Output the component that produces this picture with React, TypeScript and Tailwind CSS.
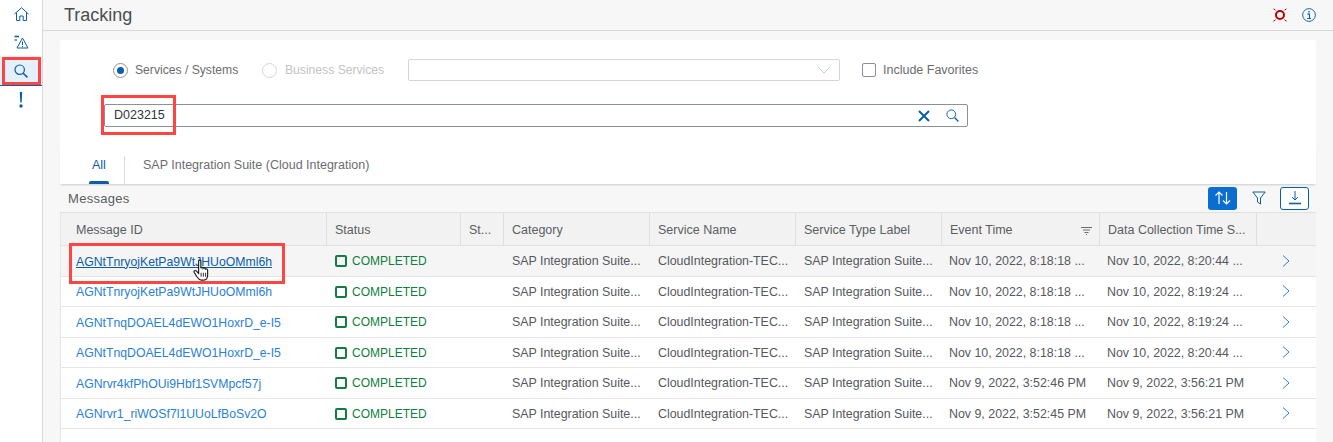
import React from "react";

const font = { fontFamily: '"Liberation Sans", Arial, sans-serif' };

const Home = () => (
  <svg width="15" height="14" viewBox="0 0 15 14" fill="none" stroke="#0a5ea8" strokeWidth="1">
    <path d="M0.5 7 L7.5 0.8 L14.5 7 M2.5 5.5 V13.5 H5.8 V9 H9.2 V13.5 H12.5 V5.5" />
  </svg>
);
const AlertList = () => (
  <svg width="15" height="14" viewBox="0 0 15 14" fill="none" stroke="#0a5ea8" strokeWidth="1">
    <path d="M0.5 1.5 H5" strokeWidth="1.6" />
    <path d="M0.5 5 H3" strokeWidth="1.2" />
    <path d="M8.5 3 L14 13 H3 Z" />
    <path d="M8.5 6.5 V10 M8.5 10.8 V12" />
  </svg>
);
const Search = ({ size = 14, w = 1.2 }: { size?: number; w?: number }) => (
  <svg width={size} height={size} viewBox="0 0 14 14" fill="none" stroke="#0a5ea8" strokeWidth={w}>
    <circle cx="5.7" cy="5.7" r="4.7" />
    <path d="M9.2 9.2 L13.4 13.4" strokeWidth={w + 0.4} />
  </svg>
);
const Chevron = () => (
  <svg width="8" height="12" viewBox="0 0 8 12" fill="none" stroke="#2f7fc9" strokeWidth="1">
    <path d="M1 0.5 L7 6 L1 11.5" />
  </svg>
);

const columns = [
  "Message ID",
  "Status",
  "St...",
  "Category",
  "Service Name",
  "Service Type Label",
  "Event Time",
  "Data Collection Time S...",
  "",
];

const gridCols = "grid grid-cols-[266px_134px_43px_146px_146px_146px_158px_157px_59px]";

const rows = [
  ["AGNtTnryojKetPa9WtJHUoOMml6h", "Nov 10, 2022, 8:18:18 ...", "Nov 10, 2022, 8:20:44 ..."],
  ["AGNtTnryojKetPa9WtJHUoOMml6h", "Nov 10, 2022, 8:18:18 ...", "Nov 10, 2022, 8:19:24 ..."],
  ["AGNtTnqDOAEL4dEWO1HoxrD_e-I5", "Nov 10, 2022, 8:18:18 ...", "Nov 10, 2022, 8:19:24 ..."],
  ["AGNtTnqDOAEL4dEWO1HoxrD_e-I5", "Nov 10, 2022, 8:18:18 ...", "Nov 10, 2022, 8:20:44 ..."],
  ["AGNrvr4kfPhOUi9Hbf1SVMpcf57j", "Nov 9, 2022, 3:52:46 PM", "Nov 9, 2022, 3:56:21 PM"],
  ["AGNrvr1_riWOSf7l1UUoLfBoSv2O", "Nov 9, 2022, 3:52:45 PM", "Nov 9, 2022, 3:56:21 PM"],
];

const cell = "flex items-center pt-[2px] text-[12.4px] text-[#55595d] whitespace-nowrap";

export default function App() {
  return (
    <div style={font} className="flex w-[1333px] h-[442px] overflow-hidden bg-[#f7f7f7] text-[13px] text-[#32363a]">
      <nav className="w-[43px] shrink-0 bg-white border-r border-[#d9d9d9] flex flex-col">
        <div className="h-[28px] flex items-center justify-center"><Home /></div>
        <div className="h-[28px] flex items-center justify-center"><AlertList /></div>
        <div className="relative h-[30px] flex items-center justify-center bg-[#e5f0fa] border-b border-[#0a5ea8]">
          <Search size={14} />
          <div className="absolute left-[2px] top-[1px] w-[39px] h-[28px] border-[3px] border-[#ff4444]" />
        </div>
        <div className="h-[28px] flex items-center justify-center text-[#0a5ea8]">
          <svg width="4" height="16" viewBox="0 0 4 16" fill="#0a5ea8">
            <path d="M0.8 0 H3.2 L2.7 10.5 H1.3 Z" />
            <circle cx="2" cy="14" r="1.7" />
          </svg>
        </div>
      </nav>

      <main className="flex-1 min-w-0 flex flex-col">
        <header className="h-[31px] shrink-0 border-b border-[#d9d9d9] flex items-center justify-between pl-[21px] pr-[18px] mr-[-1px]">
          <h1 className="text-[18px] leading-none text-[#4a4e52]">Tracking</h1>
          <div className="flex items-center gap-[15px]">
            <svg width="14" height="14" viewBox="0 0 14 14" fill="none" stroke="#bb0000" className="mt-[-1px]">
              <circle cx="7" cy="7" r="4" strokeWidth="2" />
              <path d="M0.5 0.8 L2.5 2.2 M13.5 0.8 L11.5 2.2 M0.5 13.2 L2.5 11.8 M13.5 13.2 L11.5 11.8" strokeWidth="1" />
            </svg>
            <svg width="14" height="14" viewBox="0 0 15 15" fill="none" stroke="#0a5ea8">
              <circle cx="7.5" cy="7.5" r="6.8" />
              <circle cx="7.5" cy="4" r="0.9" fill="#0a5ea8" stroke="none" />
              <path d="M5.8 6.5 H8 V11 M5.6 11.2 H9.6" strokeWidth="1.2" />
            </svg>
          </div>
        </header>

        <div className="flex-1 min-h-0 pl-[17px] pr-[17px] pt-[9px] flex flex-col">
          <section className="relative h-[105px] shrink-0 bg-white rounded-t-[3px] pl-[44px]">
            <div className="flex items-center h-[22px] mt-[19px] text-[12.15px]">
              <span className="w-[15px] h-[15px] rounded-full border border-[#89919a] flex items-center justify-center mr-[7px] ml-[9px]">
                <span className="w-[7px] h-[7px] rounded-full bg-[#0a5ea8]" />
              </span>
              <span className="w-[123px] text-[#6a6d70]">Services / Systems</span>
              <span className="w-[15px] h-[15px] rounded-full border border-[#d5d7d9] mr-[8px] ml-[4px]" />
              <span className="w-[123px] text-[#c2c4c6]">Business Services</span>
              <div className="w-[432px] h-[22px] border border-[#d3d5d7] rounded-[2px] flex items-center justify-end pr-[9px]">
                <svg width="12" height="7" viewBox="0 0 12 7" fill="none" stroke="#b9cde2">
                  <path d="M0.5 0.5 L6 6 L11.5 0.5" />
                </svg>
              </div>
              <span className="w-[14px] h-[14px] border border-[#89919a] rounded-[2px] ml-[22px] mr-[7px]" />
              <span className="text-[12.5px] text-[#6a6d70]">Include Favorites</span>
            </div>
            <div className="flex items-center w-[864px] h-[23px] mt-[23px] border border-[#89919a] rounded-[2px] pl-[9px] pr-[8px] text-[12.5px]">
              <span className="flex-1 text-[#32363a]">D023215</span>
              <svg width="12" height="12" viewBox="0 0 12 12" fill="none" stroke="#0a5ea8" strokeWidth="2" className="mr-[16px]">
                <path d="M1 1 L11 11 M11 1 L1 11" />
              </svg>
              <Search size={13} w={1} />
            </div>
            <div className="absolute left-[41px] top-[55px] w-[75px] h-[40px] border-[3px] border-[#ff4444]" />
          </section>

          <div className="h-[39px] shrink-0 bg-white flex items-stretch shadow-[0_2px_2px_-1px_rgba(0,0,0,0.18)] relative z-10 text-[12.5px]">
            <div className="relative w-[64px] flex items-center pt-[2px] pl-[32px] text-[#0a5ea8]">
              All
              <span className="absolute left-[29px] bottom-0 w-[20px] h-[3px] rounded-t-[2px] bg-[#0a5ea8]" />
            </div>
            <span className="w-px mt-[11px] bg-[#d9d9d9]" />
            <div className="flex items-center pt-[2px] pl-[18px] text-[#6a6d70]">SAP Integration Suite (Cloud Integration)</div>
          </div>

          <div className="h-[29px] shrink-0 bg-[#f7f7f7] border-b border-[#e0e0e0] flex items-center pl-[8px] pr-[7px]">
            <span className="flex-1 pt-[2px] text-[#5a5e62] text-[13px] tracking-[0.3px]">Messages</span>
            <button className="w-[29px] h-[23px] rounded-[3px] bg-[#0a6ed1] flex items-center justify-center">
              <svg width="18" height="16" viewBox="0 0 18 16" fill="none" stroke="#ffffff" strokeWidth="1.2">
                <path d="M5 14 V2 M1.5 5.5 L5 2 L8.5 5.5 M12.5 2 V14 M9 10.5 L12.5 14 L16 10.5" />
              </svg>
            </button>
            <span className="w-[43px] flex items-center justify-center">
              <svg width="14" height="14" viewBox="0 0 14 14" fill="none" stroke="#0a5ea8">
                <path d="M0.8 1 H13.2 L8.5 7 V13 L5.5 11 V7 Z" />
              </svg>
            </span>
            <button className="w-[29px] h-[23px] rounded-[3px] bg-white border border-[#0a5ea8] flex items-center justify-center">
              <svg width="14" height="14" viewBox="0 0 14 14" fill="none" stroke="#0a5ea8">
                <path d="M7 0 V8.5 M4 6 L7 9 L10 6" />
                <path d="M1 12.5 H13" strokeWidth="1.6" />
              </svg>
            </button>
          </div>

          <div className="flex-1 bg-white border-l border-[#e5e5e5]">
            <div className={`${gridCols} h-[33px] bg-[#f2f2f2] border-b border-[#e0e0e0] text-[12.5px] text-[#5a5e62]`}>
              {columns.map((c, i) => (
                <div key={i} className={`relative flex items-center pt-[2px] ${i === 8 ? "" : "border-r border-[#e0e0e0]"} ${i === 0 ? "pl-[15px]" : "pl-[8px]"}`}>
                  {c}
                  {c === "Event Time" && (
                    <svg width="11" height="8" viewBox="0 0 11 8" className="absolute right-[7px] top-[14px]" stroke="#6a6d70" fill="none">
                      <path d="M0 0.5 H11 M2 3 H9 M3.5 5.5 H7.5 M5 7.5 H6" />
                    </svg>
                  )}
                </div>
              ))}
            </div>
            {rows.map((r, i) => (
              <div key={i} className={`${gridCols} relative h-[30.5px] border-b border-[#e5e5e5] ${i === 0 ? "bg-[#f5f5f5]" : "bg-white"}`}>
                <div className="flex items-center pt-[2px] pl-[15px] text-[12.25px]">
                  <a className={`whitespace-nowrap ${i === 0 ? "underline text-[#0a5ea8]" : "text-[#2a7fd6]"}`}>{r[0]}</a>
                </div>
                <div className="flex items-center pt-[1px] pl-[8px] text-[#107e3e] text-[12px]">
                  <span className="w-[12px] h-[12px] rounded-[2px] border-2 border-[#107e3e] mr-[5px]" />
                  COMPLETED
                </div>
                <div />
                <div className={`${cell} pl-[8px]`}>SAP Integration Suite...</div>
                <div className={`${cell} pl-[8px]`}>CloudIntegration-TEC...</div>
                <div className={`${cell} pl-[8px]`}>SAP Integration Suite...</div>
                <div className={`${cell} pl-[7px]`}>{r[1]}</div>
                <div className={`${cell} pl-[7px]`}>{r[2]}</div>
                <div className="flex items-center pl-[25px]"><Chevron /></div>
                {i === 0 && (
                  <>
                    <div className="absolute z-10 left-[8px] top-[-3px] w-[216px] h-[41px] border-[3px] border-[#ff4444]" />
                    <svg width="18" height="23" viewBox="0 0 16 20" className="absolute z-10 left-[132px] top-[13px]">
                      <path d="M5 1.5 C5 0.5 7 0.5 7 1.5 V8 C7.5 7 9 7 9 8.2 C9.7 7.4 11 7.6 11 8.8 C11.8 8.2 13 8.6 13 9.8 V14 C13 17 11.5 18.5 9.5 18.5 H7.5 C5.5 18.5 4.5 17 3.5 15.5 L1 11.5 C0.5 10.3 2 9.5 3 10.5 L5 12.5 Z" fill="#ffffff" stroke="#1a1a1a" strokeWidth="1" />
                      <path d="M7.2 12 V15.5 M9.2 12 V15.5 M11.2 12 V15.5" stroke="#1a1a1a" strokeWidth="0.8" />
                    </svg>
                  </>
                )}
              </div>
            ))}
          </div>
        </div>
      </main>
    </div>
  );
}
